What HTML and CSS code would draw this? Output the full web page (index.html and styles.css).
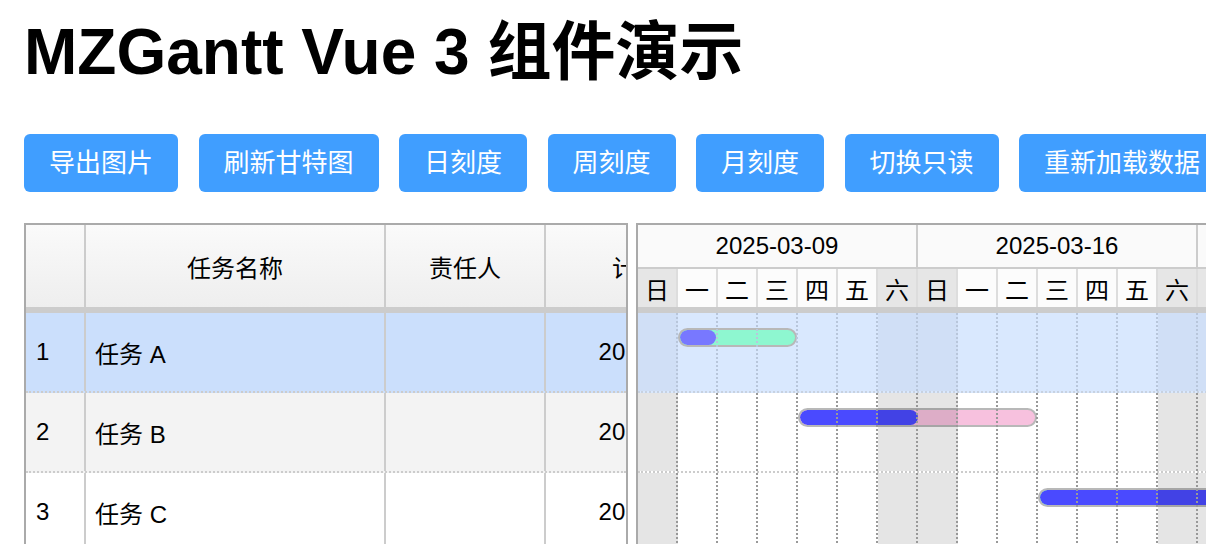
FILE: index.html
```html
<!DOCTYPE html>
<html lang="zh-CN">
<head>
<meta charset="utf-8">
<title>MZGantt Vue 3 组件演示</title>
<link rel="stylesheet" href="styles.css">
</head>
<body>
<div class="app">
  <h1 class="title">MZGantt Vue 3 组件演示</h1>
  <div class="toolbar">
    <button class="btn">导出图片</button>
    <button class="btn">刷新甘特图</button>
    <button class="btn">日刻度</button>
    <button class="btn">周刻度</button>
    <button class="btn">月刻度</button>
    <button class="btn">切换只读</button>
    <button class="btn">重新加载数据</button>
  </div>
  <div class="gantt">
    <div class="grid-panel">
      <div class="grid-head">
        <div class="gc c-idx"></div>
        <div class="gc c-name center">任务名称</div>
        <div class="gc c-owner center">责任人</div>
        <div class="gc c-start center">计划开始</div>
      </div>
      <div class="head-sep"></div>
      <div class="grid-row selected">
        <div class="gc c-idx">1</div>
        <div class="gc c-name">任务 A</div>
        <div class="gc c-owner"></div>
        <div class="gc c-start center">2025-03-10</div>
      </div>
      <div class="grid-row striped">
        <div class="gc c-idx">2</div>
        <div class="gc c-name">任务 B</div>
        <div class="gc c-owner"></div>
        <div class="gc c-start center">2025-03-13</div>
      </div>
      <div class="grid-row">
        <div class="gc c-idx">3</div>
        <div class="gc c-name">任务 C</div>
        <div class="gc c-owner"></div>
        <div class="gc c-start center">2025-03-19</div>
      </div>
    </div>
    <div class="splitter"></div>
    <div class="chart-panel">
      <div class="chart-head">
        <div class="weeks">
          <div class="week">2025-03-09</div>
          <div class="week">2025-03-16</div>
          <div class="week">2025-03-23</div>
        </div>
        <div class="days">
          <div class="day we">日</div><div class="day">一</div><div class="day">二</div><div class="day">三</div><div class="day">四</div><div class="day">五</div><div class="day we">六</div>
          <div class="day we">日</div><div class="day">一</div><div class="day">二</div><div class="day">三</div><div class="day">四</div><div class="day">五</div><div class="day we">六</div>
          <div class="day we">日</div><div class="day">一</div><div class="day">二</div><div class="day">三</div><div class="day">四</div><div class="day">五</div><div class="day we">六</div>
        </div>
      </div>
      <div class="head-sep"></div>
      <div class="chart-row selected">
        <div class="cell we"></div><div class="cell"></div><div class="cell"></div><div class="cell"></div><div class="cell"></div><div class="cell"></div><div class="cell we"></div>
        <div class="cell we"></div><div class="cell"></div><div class="cell"></div><div class="cell"></div><div class="cell"></div><div class="cell"></div><div class="cell we"></div>
        <div class="cell we"></div><div class="cell"></div><div class="cell"></div><div class="cell"></div><div class="cell"></div><div class="cell"></div><div class="cell we"></div>
        <div class="bar bar-a" style="left:40px;width:119px"><div class="bar-progress" style="width:31%"></div></div>
      </div>
      <div class="chart-row">
        <div class="cell we"></div><div class="cell"></div><div class="cell"></div><div class="cell"></div><div class="cell"></div><div class="cell"></div><div class="cell we"></div>
        <div class="cell we"></div><div class="cell"></div><div class="cell"></div><div class="cell"></div><div class="cell"></div><div class="cell"></div><div class="cell we"></div>
        <div class="cell we"></div><div class="cell"></div><div class="cell"></div><div class="cell"></div><div class="cell"></div><div class="cell"></div><div class="cell we"></div>
        <div class="bar bar-b" style="left:160px;width:239px"><div class="bar-progress" style="width:50%"></div></div>
      </div>
      <div class="chart-row">
        <div class="cell we"></div><div class="cell"></div><div class="cell"></div><div class="cell"></div><div class="cell"></div><div class="cell"></div><div class="cell we"></div>
        <div class="cell we"></div><div class="cell"></div><div class="cell"></div><div class="cell"></div><div class="cell"></div><div class="cell"></div><div class="cell we"></div>
        <div class="cell we"></div><div class="cell"></div><div class="cell"></div><div class="cell"></div><div class="cell"></div><div class="cell"></div><div class="cell we"></div>
        <div class="bar bar-c" style="left:400px;width:279px"><div class="bar-progress" style="width:100%"></div></div>
      </div>
    </div>
  </div>
</div>
</body>
</html>
```

FILE: styles.css
```css
html, body {
  margin: 0;
  padding: 0;
  overflow: hidden;
  background: #fff;
}

body {
  font-family: "Liberation Sans", "Noto Sans CJK SC", sans-serif;
  color: #000;
}

.app {
  padding: 0 24px;
}

.title {
  margin: 12px 0 0;
  font-size: 64px;
  line-height: 80px;
  font-weight: bold;
  font-family: "Liberation Sans", "Noto Sans CJK SC", sans-serif;
  white-space: nowrap;
}

.toolbar {
  display: flex;
  gap: 20.5px;
  margin-top: 42px;
  white-space: nowrap;
}

.btn {
  flex-shrink: 0;
  height: 58px;
  padding: 0 25px;
  border: none;
  border-radius: 6px;
  background: #409eff;
  color: #fff;
  font-family: "Liberation Sans", "Noto Sans CJK SC", sans-serif;
  font-size: 26px;
  line-height: 58px;
}

.gantt {
  display: flex;
  margin-top: 31px;
  width: max-content;
}

/* left grid */
.grid-panel {
  width: 604px;
  box-sizing: border-box;
  border: 2px solid #aaa;
  border-bottom: none;
  overflow: hidden;
  font-size: 24px;
}

.grid-head {
  display: flex;
  height: 82px;
  background: linear-gradient(#fafafa, #eeeeee);
}

.grid-head .gc {
  justify-content: center;
}

.head-sep {
  height: 6px;
  background: #cccccc;
}

.grid-row {
  display: flex;
  height: 80px;
  box-sizing: border-box;
  border-bottom: 2px dotted #cccccc;
  background: #fff;
}

.grid-row.selected {
  background: #cbdffc;
}

.grid-row.striped {
  background: #f3f3f3;
}

.gc {
  flex-shrink: 0;
  box-sizing: border-box;
  display: flex;
  align-items: center;
  border-right: 2px solid #cccccc;
  white-space: nowrap;
  overflow: hidden;
}

.c-idx { width: 60px; padding-left: 10px; }
.c-name { width: 300px; padding-left: 9px; }
.c-owner { width: 160px; }
.c-start { width: 230px; }
.gc.center { justify-content: center; padding-left: 0; }

.splitter {
  width: 8px;
  flex-shrink: 0;
  background: #fff;
}

/* right chart */
.chart-panel {
  border-top: 2px solid #aaa;
  border-left: 2px solid #aaa;
  font-size: 24px;
}

.chart-head {
  background: #fafafa;
}

.weeks {
  display: flex;
  height: 44px;
  box-sizing: border-box;
  border-bottom: 2px solid #cccccc;
}

.week {
  width: 280px;
  flex-shrink: 0;
  box-sizing: border-box;
  border-right: 2px solid #cccccc;
  display: flex;
  align-items: center;
  justify-content: center;
}

.days {
  display: flex;
  height: 38px;
}

.day {
  width: 40px;
  flex-shrink: 0;
  box-sizing: border-box;
  border-right: 2px solid #dddddd;
  display: flex;
  align-items: center;
  justify-content: center;
  background: #fcfcfc;
}

.day.we {
  background: #e6e6e6;
}

.chart-row {
  position: relative;
  display: flex;
  height: 80px;
  box-sizing: border-box;
  border-bottom: 2px dotted #cccccc;
  background: #fff;
}

.chart-row.selected {
  background: #d9e8fe;
  border-bottom-color: #c8d2e0;
}

.cell {
  position: relative;
  z-index: 1;
  width: 40px;
  flex-shrink: 0;
  box-sizing: border-box;
  border-right: 2px dotted #999999;
}

.cell.we {
  background: rgba(0, 0, 0, 0.1);
}

.chart-row.selected .cell {
  border-right-color: #b8c6db;
}

.chart-row.selected .cell.we {
  background: rgba(0, 20, 60, 0.04);
}

.bar {
  position: absolute;
  z-index: 0;
  top: 15px;
  height: 19px;
  box-sizing: border-box;
  border: 2px solid #b8b8b8;
  border-radius: 10px;
  overflow: hidden;
}

.bar-progress {
  height: 100%;
  border-radius: 8px;
}

.bar-a { background: #8ef7d0; }
.bar-a .bar-progress { background: #7878ff; }

.bar-b { background: #f7c1de; }
.bar-b .bar-progress { background: #4a4aff; }

.bar-c { background: #8ef7d0; }
.bar-c .bar-progress { background: #4a4aff; }
```
